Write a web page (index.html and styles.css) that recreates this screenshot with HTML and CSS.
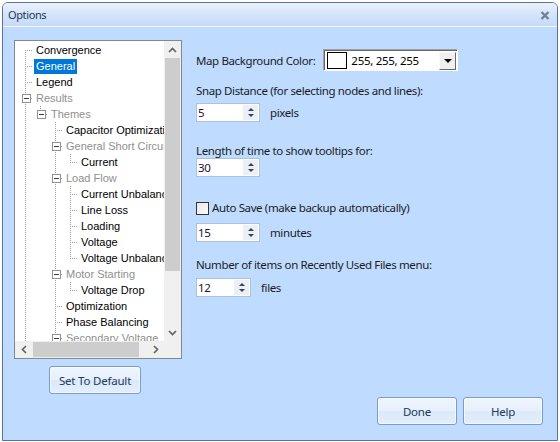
FILE: index.html
```html
<!DOCTYPE html>
<html lang="en">
<head>
    <meta charset="UTF-8">
    <title>Options</title>
    <link rel="stylesheet" href="styles.css">
</head>
<body>
    <div class="window">
        <div class="titlebar">
            <span class="title">Options</span>
            <svg class="close" width="10" height="9" viewBox="0 0 10 9">
                <path d="M1.5 1 L8.5 8 M8.5 1 L1.5 8" stroke="#6f8198" stroke-width="2.4" fill="none"/>
            </svg>
        </div>

        <div class="content">
            <div class="left">
                <div class="tree">
                    <div class="tree-main">
                        <div class="tree-items">
                            <div class="node"><i class="first"></i><span class="label">Convergence</span></div>
                            <div class="node"><i class="tee"></i><span class="label selected">General</span></div>
                            <div class="node"><i class="tee"></i><span class="label">Legend</span></div>
                            <div class="node"><i class="tee"><b class="box"></b></i><span class="label off">Results</span></div>
                            <div class="node"><i class="bar"></i><i class="end"><b class="box"></b></i><span class="label off">Themes</span></div>
                            <div class="node"><i class="bar"></i><i></i><i class="tee"></i><span class="label">Capacitor Optimization</span></div>
                            <div class="node"><i class="bar"></i><i></i><i class="tee"><b class="box"></b></i><span class="label off">General Short Circuit</span></div>
                            <div class="node"><i class="bar"></i><i></i><i class="bar"></i><i class="end"></i><span class="label">Current</span></div>
                            <div class="node"><i class="bar"></i><i></i><i class="tee"><b class="box"></b></i><span class="label off">Load Flow</span></div>
                            <div class="node"><i class="bar"></i><i></i><i class="bar"></i><i class="tee"></i><span class="label">Current Unbalance</span></div>
                            <div class="node"><i class="bar"></i><i></i><i class="bar"></i><i class="tee"></i><span class="label">Line Loss</span></div>
                            <div class="node"><i class="bar"></i><i></i><i class="bar"></i><i class="tee"></i><span class="label">Loading</span></div>
                            <div class="node"><i class="bar"></i><i></i><i class="bar"></i><i class="tee"></i><span class="label">Voltage</span></div>
                            <div class="node"><i class="bar"></i><i></i><i class="bar"></i><i class="end"></i><span class="label">Voltage Unbalance</span></div>
                            <div class="node"><i class="bar"></i><i></i><i class="tee"><b class="box"></b></i><span class="label off">Motor Starting</span></div>
                            <div class="node"><i class="bar"></i><i></i><i class="bar"></i><i class="end"></i><span class="label">Voltage Drop</span></div>
                            <div class="node"><i class="bar"></i><i></i><i class="tee"></i><span class="label">Optimization</span></div>
                            <div class="node"><i class="bar"></i><i></i><i class="tee"></i><span class="label">Phase Balancing</span></div>
                            <div class="node"><i class="bar"></i><i></i><i class="tee"><b class="box"></b></i><span class="label off">Secondary Voltage</span></div>
                        </div>
                        <div class="vscroll">
                            <div class="sb-btn">
                                <svg width="9" height="6" viewBox="0 0 9 6"><path d="M1 5 L4.5 1.5 L8 5" stroke="#606060" stroke-width="1.6" fill="none"/></svg>
                            </div>
                            <div class="vthumb"></div>
                            <div class="track"></div>
                            <div class="sb-btn">
                                <svg width="9" height="6" viewBox="0 0 9 6"><path d="M1 1 L4.5 4.5 L8 1" stroke="#606060" stroke-width="1.6" fill="none"/></svg>
                            </div>
                        </div>
                    </div>
                    <div class="tree-bottom">
                        <div class="hscroll">
                            <div class="sb-btn">
                                <svg width="6" height="9" viewBox="0 0 6 9"><path d="M5 1 L1.5 4.5 L5 8" stroke="#606060" stroke-width="1.6" fill="none"/></svg>
                            </div>
                            <div class="hthumb"></div>
                            <div class="track"></div>
                            <div class="sb-btn">
                                <svg width="6" height="9" viewBox="0 0 6 9"><path d="M1 1 L4.5 4.5 L1 8" stroke="#606060" stroke-width="1.6" fill="none"/></svg>
                            </div>
                        </div>
                        <div class="corner"></div>
                    </div>
                </div>
                <button class="btn btn-default">Set To Default</button>
            </div>

            <div class="right">
                <div class="color-row">
                    <span>Map Background Color:</span>
                    <div class="combo">
                        <span class="swatch"></span>
                        <span class="combo-text">255, 255, 255</span>
                        <span class="combo-btn"><i class="tri-down"></i></span>
                    </div>
                </div>

                <div class="field-label snap-label">Snap Distance (for selecting nodes and lines):</div>
                <div class="spin-row snap-spin">
                    <div class="spin"><span class="spin-value">5</span><span class="spin-btns"><i class="up"></i><i class="down"></i></span></div>
                    <span class="unit">pixels</span>
                </div>

                <div class="field-label tip-label">Length of time to show tooltips for:</div>
                <div class="spin-row">
                    <div class="spin"><span class="spin-value">30</span><span class="spin-btns"><i class="up"></i><i class="down"></i></span></div>
                </div>

                <label class="check-row">
                    <span class="checkbox"></span>
                    <span>Auto Save (make backup automatically)</span>
                </label>
                <div class="spin-row save-spin">
                    <div class="spin"><span class="spin-value">15</span><span class="spin-btns"><i class="up"></i><i class="down"></i></span></div>
                    <span class="unit">minutes</span>
                </div>

                <div class="field-label recent-label">Number of items on Recently Used Files menu:</div>
                <div class="spin-row recent-spin">
                    <div class="spin spin-small"><span class="spin-value">12</span><span class="spin-btns"><i class="up"></i><i class="down"></i></span></div>
                    <span class="unit">files</span>
                </div>

                <div class="footer">
                    <button class="btn btn-action">Done</button>
                    <button class="btn btn-action">Help</button>
                </div>
            </div>
        </div>
    </div>
</body>
</html>
```

FILE: styles.css
```css
body {
    margin: 0;
    padding: 2px 0 0 2px;
    background: #ffffff;
    font-family: 'Noto Sans', 'Open Sans', sans-serif;
    font-size: 11.5px;
    letter-spacing: -0.38px;
    color: #1b1b1b;
}

.window {
    width: 556px;
    height: 439px;
    box-sizing: border-box;
    border: 1px solid #58739a;
    border-radius: 6px 6px 0 0;
    display: flex;
    flex-direction: column;
    overflow: hidden;
}

.titlebar {
    height: 23px;
    border-bottom: 1px solid #f3f8fe;
    background: linear-gradient(#eaf2fc, #d6e5f9 45%, #c5dbf7);
    display: flex;
    align-items: center;
    justify-content: space-between;
    padding: 0 7px 0 5px;
}

.title {
    color: #1e395b;
    font-size: 11px;
    line-height: 14px;
}

.close {
    display: block;
    margin-top: 1px;
}

.content {
    flex: 1;
    display: flex;
    background: #bfdbff;
}

/* left side: tree */

.left {
    padding: 13px 0 0 11px;
    display: flex;
    flex-direction: column;
    align-items: flex-start;
}

.tree {
    width: 168px;
    height: 319px;
    box-sizing: border-box;
    border: 1px solid #828790;
    background: #ffffff;
    display: flex;
    flex-direction: column;
}

.tree-main {
    flex: 1;
    display: flex;
    min-height: 0;
}

.tree-items {
    flex: 1;
    overflow: hidden;
    padding: 1px 0 0 3px;
    font-family: 'Liberation Sans', Arial, sans-serif;
    font-size: 11px;
    letter-spacing: 0;
    color: #000000;
    white-space: nowrap;
}

.node {
    height: 16px;
    display: flex;
    align-items: center;
}

.node i {
    width: 15px;
    height: 16px;
    flex: none;
    display: flex;
    align-items: center;
    justify-content: center;
}

.node .bar {
    background: repeating-linear-gradient(to bottom, #a0a0a0 0 1px, transparent 1px 2px) 7px 0 / 1px 100% no-repeat;
}

.node .tee {
    background:
        repeating-linear-gradient(to bottom, #a0a0a0 0 1px, transparent 1px 2px) 7px 0 / 1px 100% no-repeat,
        repeating-linear-gradient(to right, #a0a0a0 0 1px, transparent 1px 2px) 9px 8px / 7px 1px no-repeat;
}

.node .first {
    background:
        repeating-linear-gradient(to bottom, #a0a0a0 0 1px, transparent 1px 2px) 7px 8px / 1px 8px no-repeat,
        repeating-linear-gradient(to right, #a0a0a0 0 1px, transparent 1px 2px) 9px 8px / 7px 1px no-repeat;
}

.node .end {
    background:
        repeating-linear-gradient(to bottom, #a0a0a0 0 1px, transparent 1px 2px) 7px 0 / 1px 9px no-repeat,
        repeating-linear-gradient(to right, #a0a0a0 0 1px, transparent 1px 2px) 9px 8px / 7px 1px no-repeat;
}

.box {
    width: 9px;
    height: 9px;
    box-sizing: border-box;
    border: 1px solid #919191;
    background: #ffffff linear-gradient(#3c3c3c, #3c3c3c) center / 5px 1px no-repeat;
    margin-left: 1px;
}

.label {
    margin-left: 1px;
    padding: 0 2px;
    line-height: 15px;
}

.label.off {
    color: #8f8f8f;
}

.label.selected {
    background: #0078d7;
    color: #ffffff;
}

.vscroll {
    width: 17px;
    flex: none;
    background: #f0f0f0;
    display: flex;
    flex-direction: column;
}

.sb-btn {
    width: 17px;
    height: 17px;
    flex: none;
    display: flex;
    align-items: center;
    justify-content: center;
}

.sb-btn svg {
    display: block;
}

.vthumb {
    height: 213px;
    margin: 0 1px;
    background: #cdcdcd;
}

.track {
    flex: 1;
}

.tree-bottom {
    height: 17px;
    display: flex;
    background: #f0f0f0;
}

.hscroll {
    flex: 1;
    display: flex;
}

.hthumb {
    width: 106px;
    margin: 1px 0 1px 1px;
    background: #cdcdcd;
}

.corner {
    width: 17px;
    background: #f0f0f0;
}

/* buttons */

.btn {
    font-family: 'Noto Sans', 'Open Sans', sans-serif;
    font-size: 11.5px;
    letter-spacing: -0.2px;
    color: #1e395b;
    height: 28px;
    padding: 0;
    border: 1px solid #7d9cc4;
    border-radius: 3px;
    background: linear-gradient(#eef5fd, #e6f0fc 50%, #dbe9fa 52%, #e2eefc);
    box-shadow: inset 0 0 0 1px rgba(255, 255, 255, 0.6);
}

.btn-default {
    width: 92px;
    margin: 7px 0 0 35px;
}

.btn-action {
    width: 80px;
}

/* right side: settings */

.right {
    flex: 1;
    margin-left: 14px;
    padding: 22px 14px 15px 0;
    display: flex;
    flex-direction: column;
}

.color-row {
    height: 22px;
    display: flex;
    align-items: center;
    gap: 8px;
}

.combo {
    width: 135px;
    height: 22px;
    box-sizing: border-box;
    border: 1px solid;
    border-color: #a0a0a0 #ffffff #ffffff #a0a0a0;
    box-shadow: inset 1px 1px 0 #696969;
    background: #ffffff;
    display: flex;
    align-items: center;
    padding: 1px 1px 0 3px;
}

.swatch {
    width: 20px;
    height: 17px;
    box-sizing: border-box;
    border: 1px solid #000000;
    background: #ffffff;
}

.combo-text {
    flex: 1;
    margin-left: 4px;
    color: #000000;
    font-size: 11.5px;
    letter-spacing: -0.3px;
}

.combo-btn {
    width: 17px;
    height: 18px;
    box-sizing: border-box;
    border: 1px solid;
    border-color: #f8f8f8 #696969 #696969 #f8f8f8;
    background: #f0f0f0;
    display: flex;
    align-items: center;
    justify-content: center;
}

.tri-down {
    width: 0;
    height: 0;
    border-left: 4px solid transparent;
    border-right: 4px solid transparent;
    border-top: 4px solid #000000;
    margin-top: 1px;
}

.field-label {
    line-height: 14px;
}

.snap-label {
    margin-top: 13px;
}

.tip-label {
    margin-top: 22px;
}

.recent-label {
    margin-top: 16px;
}

.spin-row {
    display: flex;
    align-items: center;
    gap: 10px;
}

.snap-spin {
    margin-top: 5px;
}

.save-spin {
    margin-top: 8px;
}

.recent-spin {
    margin-top: 6px;
}

.spin {
    width: 64px;
    height: 19px;
    box-sizing: border-box;
    border: 1px solid #aac2e0;
    background: #ffffff;
    display: flex;
    align-items: center;
    padding: 0 1px 0 1px;
}

.spin-small {
    width: 55px;
}

.spin-value {
    flex: 1;
    color: #1c1236;
    line-height: 14px;
}

.spin-btns {
    width: 15px;
    height: 15px;
    background: #ecf0f5;
    display: flex;
    flex-direction: column;
    align-items: center;
    justify-content: center;
    gap: 3px;
}

.spin-btns i {
    width: 0;
    height: 0;
    border-left: 3px solid transparent;
    border-right: 3px solid transparent;
}

.spin-btns .up {
    border-bottom: 3px solid #33435e;
}

.spin-btns .down {
    border-top: 3px solid #33435e;
}

.unit {
    line-height: 14px;
}

.check-row {
    margin-top: 24px;
    display: flex;
    align-items: center;
    gap: 3px;
    line-height: 14px;
}

.checkbox {
    width: 13px;
    height: 13px;
    box-sizing: border-box;
    border: 1px solid #333333;
    background: linear-gradient(135deg, #e9e9e9, #fafafa);
}

.footer {
    margin-top: auto;
    display: flex;
    justify-content: flex-end;
    gap: 6px;
}
```
